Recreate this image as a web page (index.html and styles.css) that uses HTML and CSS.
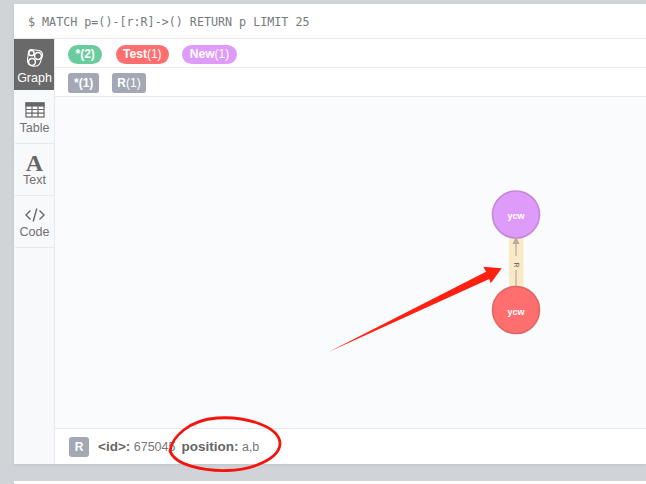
FILE: index.html
```html
<!DOCTYPE html>
<html lang="en">
<head>
<meta charset="utf-8">
<title>Neo4j result</title>
<link rel="stylesheet" href="styles.css">
</head>
<body>
<div class="card">
  <header class="query">$ MATCH p=()-[r:R]-&gt;() RETURN p LIMIT 25</header>
  <div class="main">
    <nav class="side">
      <div class="tab active">
        <svg class="ico" width="20" height="20" viewBox="0 0 20 20" fill="none" stroke="#fff" stroke-width="1.5">
          <path d="M6 1.500 L14 2.500 Q18 3.500 17.500 8 L15 15 Q13 19 8 18 Q2 17 2.500 12 L3.500 4 Q4 1.500 6 1.500Z" stroke-width="1.100"/>
          <circle cx="6.500" cy="5" r="2.600" fill="#696969"/>
          <circle cx="13" cy="8" r="3.400" fill="#696969"/>
          <circle cx="7" cy="14" r="3.400" fill="#696969"/>
        </svg>
        <span>Graph</span>
      </div>
      <div class="tab first">
        <svg class="ico" width="20" height="16" viewBox="0 0 20 16" fill="none" stroke="#666" stroke-width="1.200">
          <rect x="1" y="1" width="18" height="14" fill="#fff"/>
          <rect x="1" y="1" width="18" height="3" fill="#666"/>
          <path d="M1 7.500H19M1 11.200H19M7 4V15M13 4V15"/>
        </svg>
        <span>Table</span>
      </div>
      <div class="tab">
        <span class="glyph">A</span>
        <span>Text</span>
      </div>
      <div class="tab">
        <svg class="ico" width="20" height="14" viewBox="0 0 20 14" fill="none" stroke="#666" stroke-width="1.400">
          <path d="M5.500 2.500 L1 7 L5.500 11.500M14.500 2.500 L19 7 L14.500 11.500M11.800 .5 L8.200 13.500"/>
        </svg>
        <span>Code</span>
      </div>
    </nav>
    <section class="content">
      <div class="row">
        <span class="pill green">*(2)</span>
        <span class="pill red"><b>Test</b>(1)</span>
        <span class="pill purple"><b>New</b>(1)</span>
      </div>
      <div class="row rels">
        <span class="tag star">*(1)</span>
        <span class="tag"><b>R</b>(1)</span>
      </div>
      <div class="canvas">
        <svg class="graph" width="592" height="331" viewBox="0 0 592 331">
          <rect x="454" y="130" width="14.500" height="70" fill="#f9e9c5"/>
          <path d="M461 190V173M461 159V146" stroke="#c4bba6" stroke-width="1.600"/>
          <path d="M457.500 147L461 140L464.500 147Z" fill="#b4ad9c"/>
          <text x="0" y="0" class="rlabel" transform="translate(459 168) rotate(90)">R</text>
          <circle cx="461" cy="117.500" r="23.500" fill="#de9bf9" stroke="#c586d8" stroke-width="1.500"/>
          <circle cx="461" cy="213" r="23.500" fill="#ff6f6f" stroke="#e06464" stroke-width="1.500"/>
          <text x="461" y="122" class="nlabel">ycw</text>
          <text x="461" y="218" class="nlabel">ycw</text>
          <path d="M273.500 255 L431 174.700 L428.300 169.700 L446.700 171.300 L435.700 186.300 L434.300 182 Z" fill="#ff2012"/>
        </svg>
      </div>
      <footer class="status">
        <span class="tag square">R</span>
        <span class="prop"><b>&lt;id&gt;:</b> 675045</span>
        <span class="prop"><b>position:</b> a,b</span>
        <svg class="ring" width="118" height="60" viewBox="0 0 118 60" fill="none">
          <path d="M3 36 C5 22 22 5 50 3 C80 1 112 12 113 28 C113 44 85 55 60 55.500 C35 56 8 50 3 36Z" stroke="#f5140c" stroke-width="2.800"/>
        </svg>
      </footer>
    </section>
  </div>
</div>
<div class="next"></div>
</body>
</html>
```

FILE: styles.css
```css
html, body {
  margin: 0;
  padding: 0;
}
body {
  width: 646px;
  height: 484px;
  overflow: hidden;
  background: #d0d3d7;
  font-family: "Liberation Sans", Arial, sans-serif;
  color: #666;
  padding-top: 4px;
  box-sizing: border-box;
}
.card {
  margin-left: 14px;
  height: 460px;
  background: #fff;
  display: flex;
  flex-direction: column;
  box-shadow: 0 1px 3px rgba(0, 0, 0, .08);
}
.query {
  height: 35px;
  box-sizing: border-box;
  flex: none;
  padding: 10px 0 0 14px;
  font-family: "DejaVu Sans Mono", monospace;
  font-size: 11.700px;
  line-height: 16px;
  color: #77797c;
  border-bottom: 1px solid #e6e9ef;
}
.main {
  flex: 1;
  display: flex;
  min-height: 0;
}
.side {
  width: 41px;
  flex: none;
  box-sizing: border-box;
  background: #f8f9fb;
  border-right: 1px solid #e6e9ef;
  padding-left: 1px;
}
.tab {
  height: 52px;
  box-sizing: border-box;
  border-bottom: 1px solid #e6e9ef;
  display: flex;
  flex-direction: column;
  align-items: center;
  justify-content: flex-end;
  padding-bottom: 8px;
  font-size: 12.500px;
  line-height: 14px;
  color: #717172;
}
.tab.first {
  height: 54px;
}
.tab.active {
  background: #696969;
  color: #fff;
  border-bottom: 0;
  height: 51px;
  padding-bottom: 5px;
  margin-left: -1px;
  padding-left: 1px;
}
.ico {
  display: block;
  margin-bottom: 3px;
}
.glyph {
  font-family: "Liberation Serif", serif;
  font-weight: 700;
  font-size: 24px;
  line-height: 19px;
  color: #666;
}
.content {
  flex: 1;
  min-width: 0;
  display: flex;
  flex-direction: column;
}
.row {
  height: 29px;
  box-sizing: border-box;
  flex: none;
  display: flex;
  align-items: center;
  padding: 2px 0 0 13px;
  gap: 13.500px;
  background: #fff;
  border-bottom: 1px solid #e6e9ef;
}
.pill {
  height: 19px;
  line-height: 19px;
  border-radius: 10px;
  padding: 0 7.500px;
  font-size: 12px;
  color: #fff;
}
.pill.green {
  background: #68cc9c;
  font-weight: 700;
}
.pill.red {
  background: #ff6f6f;
  padding: 0 7.250px;
}
.pill.purple {
  background: #de9bf9;
}
.rels {
  gap: 13px;
}
.tag {
  height: 20px;
  line-height: 20px;
  border-radius: 3px;
  padding: 0 5px;
  background: #a4a8b5;
  color: #fff;
  font-size: 12px;
}
.tag.star {
  padding: 0 6px;
  font-weight: 700;
}
.canvas {
  flex: 1;
  min-height: 0;
  background: #f9fbfd;
  border-bottom: 1px solid #e6e9ef;
  overflow: hidden;
}
.graph {
  display: block;
}
.nlabel {
  font-family: "Liberation Sans", sans-serif;
  font-size: 9px;
  font-weight: 700;
  fill: #fff;
  text-anchor: middle;
}
.rlabel {
  font-family: "Liberation Sans", sans-serif;
  font-size: 7px;
  fill: #555;
  text-anchor: middle;
}
.status {
  height: 35px;
  flex: none;
  box-sizing: border-box;
  display: flex;
  align-items: center;
  padding-left: 14px;
  background: #fff;
  position: relative;
  font-size: 12.500px;
  color: #77787a;
}
.tag.square {
  width: 20px;
  box-sizing: border-box;
  padding: 0;
  text-align: center;
  font-weight: 700;
  margin-right: 9px;
}
.prop {
  white-space: nowrap;
}
.prop + .prop {
  margin-left: 6px;
}
.prop b {
  color: #666;
  font-size: 13.500px;
}
.ring {
  position: absolute;
  left: 112px;
  top: -14px;
}
.next {
  margin-top: 17px;
  margin-left: 14px;
  height: 4px;
  background: #fff;
}
```
